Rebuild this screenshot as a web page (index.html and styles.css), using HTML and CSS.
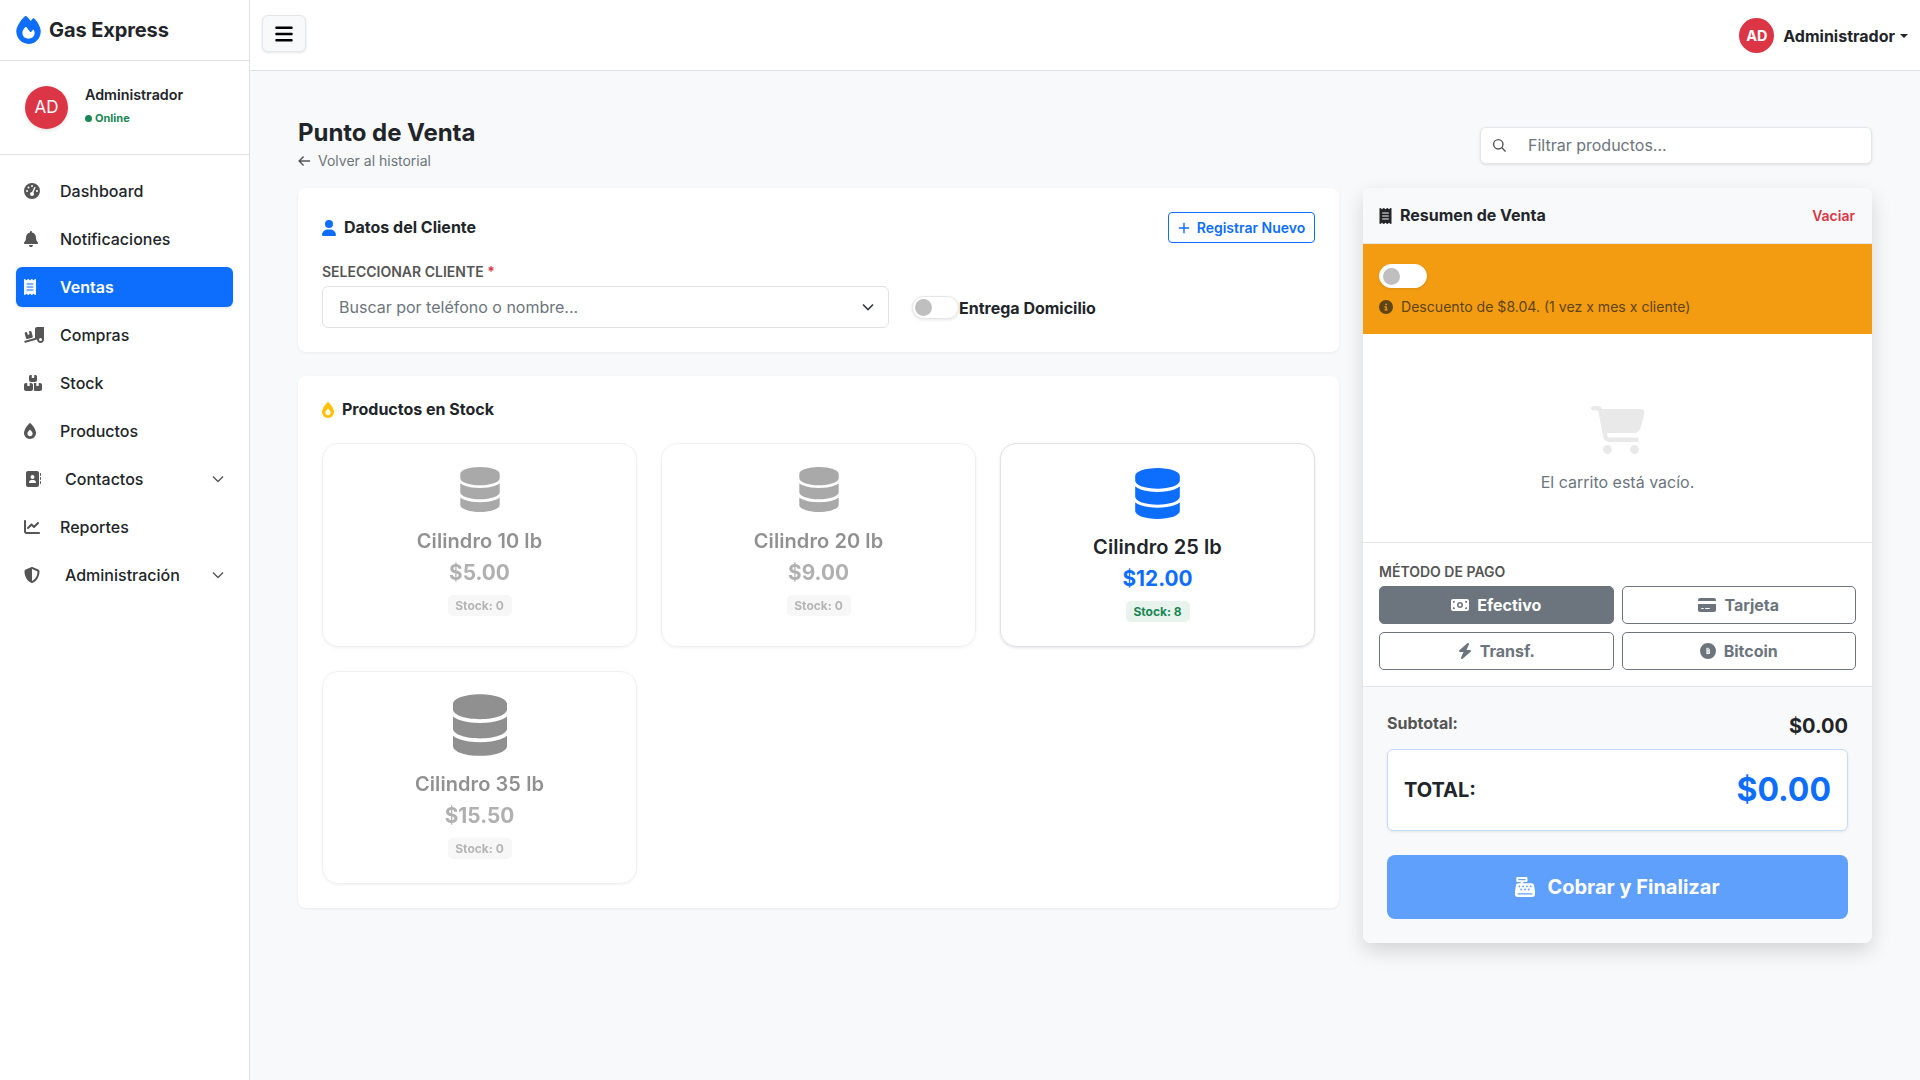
FILE: index.html
```html
<!DOCTYPE html>
<html lang="es">
<head>
<meta charset="utf-8">
<title>Punto de Venta</title>
<link rel="stylesheet" href="styles.css">
</head>
<body>
<svg class="sprite" xmlns="http://www.w3.org/2000/svg">
<symbol id="i-fire" viewBox="0 0 448 512"><path d="M159.3 5.4c7.8-7.3 19.9-7.2 27.7 .1c27.6 25.9 53.5 53.8 77.7 84c11-14.4 23.5-30.1 37-42.9c7.9-7.4 20.1-7.4 28 .1c34.6 33 63.9 76.6 84.5 118c20.3 40.8 33.8 82.5 33.8 111.9C448 404.2 348.2 512 224 512C98.4 512 0 404.1 0 276.5c0-38.4 17.8-85.3 45.4-131.7C73.3 97.7 112.7 48.6 159.3 5.4zM225.7 416c25.3 0 47.7-7 68.8-21c42.1-29.4 53.4-88.2 28.1-134.4c-4.5-9-16-9.6-22.5-2l-25.2 29.3c-6.6 7.6-18.5 7.4-24.7-.5c-16.5-21-46-58.5-62.8-79.8c-6.3-8-18.3-8.1-24.7-.1c-33.8 42.5-50.8 69.3-50.8 99.4C112 375.4 162.6 416 225.7 416z"/></symbol>
<symbol id="i-gauge" viewBox="0 0 512 512"><path d="M0 256a256 256 0 1 1 512 0A256 256 0 1 1 0 256zM288 96a32 32 0 1 0 -64 0 32 32 0 1 0 64 0zM256 416c35.3 0 64-28.7 64-64c0-17.4-6.9-33.1-18.1-44.6L366 161.7c5.3-12.1-.2-26.3-12.3-31.6s-26.3 .2-31.6 12.3L257.9 288c-.6 0-1.3 0-1.9 0c-35.3 0-64 28.7-64 64s28.7 64 64 64zM176 144a32 32 0 1 0 -64 0 32 32 0 1 0 64 0zM96 288a32 32 0 1 0 0-64 32 32 0 1 0 0 64zm352-32a32 32 0 1 0 -64 0 32 32 0 1 0 64 0z"/></symbol>
<symbol id="i-bell" viewBox="0 0 448 512"><path d="M224 0c-17.7 0-32 14.3-32 32V51.2C119 66 64 130.6 64 208v18.8c0 47-17.3 92.4-48.5 127.6l-7.4 8.3c-8.4 9.4-10.4 22.9-5.3 34.4S19.4 416 32 416H416c12.6 0 24-7.4 29.2-18.9s3.1-25-5.3-34.4l-7.4-8.3C401.3 319.2 384 273.9 384 226.8V208c0-77.4-55-142-128-156.8V32c0-17.7-14.3-32-32-32zm45.3 493.3c12-12 18.7-28.3 18.7-45.3H224 160c0 17 6.7 33.3 18.7 45.3s28.3 18.7 45.3 18.7s33.3-6.7 45.3-18.7z"/></symbol>
<symbol id="i-receipt" viewBox="0 0 384 512"><path d="M14 2.2C22.5-1.7 32.5-.3 39.6 5.8L80 40.4 120.4 5.8c9-7.7 22.3-7.7 31.2 0L192 40.4 232.4 5.8c9-7.7 22.2-7.7 31.2 0L304 40.4 344.4 5.8c7.1-6.1 17.1-7.5 25.6-3.6s14 12.4 14 21.8V488c0 9.4-5.5 17.9-14 21.8s-18.5 2.5-25.6-3.6L304 471.6l-40.4 34.6c-9 7.7-22.3 7.7-31.2 0L192 471.6l-40.4 34.6c-9 7.7-22.2 7.7-31.2 0L80 471.6 39.6 506.2c-7.1 6.1-17.1 7.5-25.6 3.6S0 497.4 0 488V24C0 14.6 5.5 6.1 14 2.2zM96 144c-8.8 0-16 7.2-16 16s7.2 16 16 16H288c8.8 0 16-7.2 16-16s-7.2-16-16-16H96zM80 352c0 8.8 7.2 16 16 16H288c8.8 0 16-7.2 16-16s-7.2-16-16-16H96c-8.8 0-16 7.2-16 16zM96 240c-8.8 0-16 7.2-16 16s7.2 16 16 16H288c8.8 0 16-7.2 16-16s-7.2-16-16-16H96z"/></symbol>
<symbol id="i-truck" viewBox="0 0 640 512"><path d="M640 0V400c0 61.9-50.1 112-112 112c-61 0-110.5-48.7-112-109.3L48.4 502.9c-17.1 4.6-34.6-5.4-39.3-22.5s5.4-34.6 22.5-39.3L352 353.8V64c0-35.3 28.7-64 64-64H640zM576 400a48 48 0 1 0 -96 0 48 48 0 1 0 96 0zM23.1 207.7c-4.6-17.1 5.6-34.6 22.6-39.2l46.4-12.4 20.7 77.3c2.3 8.5 11.1 13.6 19.6 11.3l30.9-8.3c8.5-2.3 13.6-11.1 11.3-19.6l-20.7-77.3 46.4-12.4c17.1-4.6 34.6 5.6 39.2 22.6l41.4 154.5c4.6 17.1-5.6 34.6-22.6 39.2L103.7 384.9c-17.1 4.6-34.6-5.6-39.2-22.6L23.1 207.7z"/></symbol>
<symbol id="i-boxes" viewBox="0 0 576 512"><path d="M248 0H208c-26.5 0-48 21.5-48 48V160c0 35.3 28.7 64 64 64H352c35.3 0 64-28.7 64-64V48c0-26.5-21.5-48-48-48H328V80c0 8.8-7.2 16-16 16H264c-8.8 0-16-7.2-16-16V0zM64 256c-35.3 0-64 28.7-64 64V448c0 35.3 28.7 64 64 64H224c35.3 0 64-28.7 64-64V320c0-35.3-28.7-64-64-64H184v80c0 8.8-7.2 16-16 16H120c-8.8 0-16-7.2-16-16V256H64zM352 512H512c35.3 0 64-28.7 64-64V320c0-35.3-28.7-64-64-64H472v80c0 8.8-7.2 16-16 16H408c-8.8 0-16-7.2-16-16V256H352c-15 0-28.8 5.1-39.7 13.8c4.9 10.4 7.7 22 7.7 34.2V464c0 12.2-2.8 23.8-7.7 34.2C323.2 506.9 337 512 352 512z"/></symbol>
<symbol id="i-burn" viewBox="0 0 384 512"><path fill-rule="evenodd" d="M192 0c5 0 10 2 14 5.500C282 76 340 160 372 254c8 21 12 44 12 67c0 105-86 191-192 191S0 426 0 321c0-23 4-46 12-67C44 160 102 76 178 5.500C182 2 187 0 192 0zM192 208c-34 38-84 88-84 134c0 47 38 82 84 82s84-35 84-82c0-46-50-96-84-134z"/></symbol>
<symbol id="i-book" viewBox="0 0 512 512"><path d="M96 0C60.7 0 32 28.7 32 64V448c0 35.3 28.7 64 64 64H384c35.3 0 64-28.7 64-64V64c0-35.3-28.7-64-64-64H96zM208 288h64c44.2 0 80 35.8 80 80c0 8.8-7.2 16-16 16H144c-8.8 0-16-7.2-16-16c0-44.2 35.8-80 80-80zm-32-96a64 64 0 1 1 128 0 64 64 0 1 1 -128 0zM512 80c0-8.8-7.2-16-16-16s-16 7.2-16 16v64c0 8.8 7.2 16 16 16s16-7.2 16-16V80zM496 192c-8.8 0-16 7.2-16 16v64c0 8.8 7.2 16 16 16s16-7.2 16-16V208c0-8.8-7.2-16-16-16zm16 144c0-8.8-7.2-16-16-16s-16 7.2-16 16v64c0 8.8 7.2 16 16 16s16-7.2 16-16V336z"/></symbol>
<symbol id="i-chart" viewBox="0 0 512 512"><path d="M64 64c0-17.700-14.300-32-32-32S0 46.300 0 64V400c0 44.200 35.800 80 80 80H480c17.700 0 32-14.300 32-32s-14.300-32-32-32H80c-8.800 0-16-7.200-16-16V64zm406.600 86.600c12.500-12.500 12.500-32.800 0-45.300s-32.800-12.500-45.300 0L320 210.700l-57.400-57.400c-12.500-12.500-32.800-12.500-45.300 0l-112 112c-12.500 12.500-12.500 32.800 0 45.300s32.800 12.500 45.300 0L240 221.300l57.400 57.400c12.500 12.500 32.800 12.500 45.300 0l128-128z"/></symbol>
<symbol id="i-shield" viewBox="0 0 512 512"><path d="M256 0c4.600 0 9.200 1 13.400 2.900L457.700 82.800c22 9.300 38.400 31 38.300 57.200c-.5 99.200-41.300 280.700-213.600 363.200c-16.700 8-36.100 8-52.800 0C57.300 420.700 16.500 239.200 16 140c-.1-26.200 16.300-47.900 38.300-57.200L242.700 2.900C246.800 1 251.400 0 256 0zm0 66.800V444.800C394 378 431.100 230.100 432 141.400L256 66.800l0 0z"/></symbol>
<symbol id="i-bars" viewBox="0 0 448 512"><path d="M0 96C0 78.300 14.300 64 32 64H416c17.700 0 32 14.300 32 32s-14.300 32-32 32H32C14.300 128 0 113.700 0 96zM0 256c0-17.700 14.300-32 32-32H416c17.700 0 32 14.300 32 32s-14.300 32-32 32H32c-17.700 0-32-14.300-32-32zM448 416c0 17.700-14.300 32-32 32H32c-17.700 0-32-14.300-32-32s14.300-32 32-32H416c17.700 0 32 14.300 32 32z"/></symbol>
<symbol id="i-user" viewBox="0 0 448 512"><path d="M224 256A128 128 0 1 0 224 0a128 128 0 1 0 0 256zm-45.700 48C79.800 304 0 383.800 0 482.300C0 498.700 13.300 512 29.700 512H418.300c16.400 0 29.700-13.300 29.700-29.700C448 383.800 368.200 304 269.700 304H178.300z"/></symbol>
<symbol id="i-db" viewBox="0 0 448 512"><path d="M448 80v48c0 44.200-100.300 80-224 80S0 172.200 0 128V80C0 35.800 100.300 0 224 0S448 35.800 448 80zM393.200 214.700c20.800-7.400 39.900-16.900 54.800-28.600V288c0 44.200-100.300 80-224 80S0 332.200 0 288V186.100c14.900 11.800 34 21.200 54.800 28.600C99.700 230.700 159.500 240 224 240s124.300-9.300 169.200-25.300zM0 346.100c14.900 11.800 34 21.200 54.800 28.600C99.700 390.700 159.500 400 224 400s124.300-9.300 169.200-25.300c20.800-7.400 39.900-16.900 54.800-28.600V432c0 44.200-100.300 80-224 80S0 476.200 0 432V346.100z"/></symbol>
<symbol id="i-cart" viewBox="0 0 576 512"><path d="M0 24C0 10.700 10.700 0 24 0H69.500c22 0 41.500 12.800 50.600 32h411c26.300 0 45.500 25 38.600 50.400l-41 152.300c-8.500 31.400-37 53.300-69.500 53.300H170.700l5.400 28.500c2.200 11.300 12.100 19.500 23.600 19.500H488c13.300 0 24 10.700 24 24s-10.700 24-24 24H199.700c-34.600 0-64.300-24.600-70.700-58.500L77.400 54.500c-.7-3.800-4-6.500-7.900-6.500H24C10.700 48 0 37.300 0 24zM128 464a48 48 0 1 1 96 0 48 48 0 1 1 -96 0zm336-48a48 48 0 1 1 0 96 48 48 0 1 1 0-96z"/></symbol>
<symbol id="i-info" viewBox="0 0 512 512"><path d="M256 512A256 256 0 1 0 256 0a256 256 0 1 0 0 512zM216 336h24V272H216c-13.300 0-24-10.700-24-24s10.700-24 24-24h48c13.300 0 24 10.700 24 24v88h8c13.300 0 24 10.700 24 24s-10.700 24-24 24H216c-13.300 0-24-10.700-24-24s10.700-24 24-24zm40-208a32 32 0 1 1 0 64 32 32 0 1 1 0-64z"/></symbol>
<symbol id="i-money" viewBox="0 0 576 512"><path fill-rule="evenodd" d="M64 64C28.700 64 0 92.700 0 128V384c0 35.300 28.700 64 64 64H512c35.300 0 64-28.700 64-64V128c0-35.300-28.700-64-64-64H64zm64 320H64V320c35.300 0 64 28.700 64 64zM64 192V128h64c0 35.300-28.700 64-64 64zM448 384c0-35.300 28.700-64 64-64v64H448zm64-192c-35.300 0-64-28.700-64-64h64v64zM288 160a96 96 0 1 1 0 192 96 96 0 1 1 0-192zM288 210a46 46 0 1 0 0 92 46 46 0 1 0 0-92z"/></symbol>
<symbol id="i-card" viewBox="0 0 576 512"><path d="M64 32C28.700 32 0 60.700 0 96v32H576V96c0-35.300-28.700-64-64-64H64zM576 224H0V416c0 35.300 28.700 64 64 64H512c35.300 0 64-28.700 64-64V224zM112 352h64c8.800 0 16 7.200 16 16s-7.200 16-16 16H112c-8.800 0-16-7.200-16-16s7.200-16 16-16zm112 16c0-8.800 7.200-16 16-16H368c8.800 0 16 7.200 16 16s-7.200 16-16 16H240c-8.800 0-16-7.200-16-16z"/></symbol>
<symbol id="i-bolt" viewBox="0 0 448 512"><path d="M349.400 44.600c5.900-13.700 1.500-29.700-10.600-38.500s-28.600-8-39.900 1.800l-256 224c-10 8.800-13.600 22.900-8.900 35.300S50.700 288 64 288H175.500L98.600 467.400c-5.900 13.700-1.500 29.700 10.600 38.500s28.600 8 39.900-1.800l256-224c10-8.800 13.600-22.900 8.900-35.300s-16.600-20.700-30-20.700H272.500L349.400 44.600z"/></symbol>
<symbol id="i-btc" viewBox="0 0 512 512"><path fill-rule="evenodd" d="M256 0a256 256 0 1 1 0 512A256 256 0 1 1 256 0zM204 164v184h64c34 0 56-18 56-48c0-20-10-35-28-41c14-7 22-20 22-36c0-26-18-44-48-46v-23h-22v22h-14v-22h-22v22l0 0zM240 198h22c11 0 18 7 18 17s-7 19-18 19h-22zM240 268h26c13 0 21 7 21 18s-8 20-21 20h-26z"/></symbol>
<symbol id="i-register" viewBox="0 0 512 512"><path d="M64 0C46.300 0 32 14.300 32 32V96c0 17.700 14.300 32 32 32h80v32H87c-31.600 0-58.500 23.100-63.300 54.400L1.100 364.100C.4 368.800 0 373.600 0 378.400V448c0 35.300 28.700 64 64 64H448c35.300 0 64-28.700 64-64V378.400c0-4.800-.4-9.600-1.100-14.400L488.200 214.400C483.500 183.100 456.600 160 425 160H208V128h80c17.700 0 32-14.300 32-32V32c0-17.700-14.300-32-32-32H64zM96 48H256c8.800 0 16 7.200 16 16s-7.200 16-16 16H96c-8.800 0-16-7.200-16-16s7.200-16 16-16zM64 432c0-8.800 7.200-16 16-16H432c8.800 0 16 7.200 16 16s-7.200 16-16 16H80c-8.800 0-16-7.200-16-16zm48-168a24 24 0 1 1 0-48 24 24 0 1 1 0 48zm120-24a24 24 0 1 1 -48 0 24 24 0 1 1 48 0zM160 344a24 24 0 1 1 0-48 24 24 0 1 1 0 48zM328 240a24 24 0 1 1 -48 0 24 24 0 1 1 48 0zM256 344a24 24 0 1 1 0-48 24 24 0 1 1 0 48zM424 240a24 24 0 1 1 -48 0 24 24 0 1 1 48 0zM352 344a24 24 0 1 1 0-48 24 24 0 1 1 0 48z"/></symbol>
</svg>

<div class="app">
  <aside class="sidebar">
    <div class="brand">
      <svg class="brand-icon"><use href="#i-fire"/></svg>
      <span class="brand-name">Gas Express</span>
    </div>
    <div class="user-panel">
      <div class="avatar avatar-lg">AD</div>
      <div class="user-meta">
        <div class="user-name">Administrador</div>
        <div class="user-status"><span class="dot"></span>Online</div>
      </div>
    </div>
    <nav class="nav">
      <a class="nav-link"><span class="nav-ic"><svg class="ic-gauge"><use href="#i-gauge"/></svg></span>Dashboard</a>
      <a class="nav-link"><span class="nav-ic"><svg class="ic-bell"><use href="#i-bell"/></svg></span>Notificaciones</a>
      <a class="nav-link active"><span class="nav-ic"><svg class="ic-receipt"><use href="#i-receipt"/></svg></span>Ventas</a>
      <a class="nav-link"><span class="nav-ic"><svg class="ic-truck"><use href="#i-truck"/></svg></span>Compras</a>
      <a class="nav-link"><span class="nav-ic"><svg class="ic-boxes"><use href="#i-boxes"/></svg></span>Stock</a>
      <a class="nav-link"><span class="nav-ic"><svg class="ic-burn"><use href="#i-burn"/></svg></span>Productos</a>
      <a class="nav-link"><span class="nav-ic nav-ic-wide"><svg class="ic-book"><use href="#i-book"/></svg></span>Contactos<svg class="chev" viewBox="0 0 12 8"><path d="M1 1.500l5 5 5-5"/></svg></a>
      <a class="nav-link"><span class="nav-ic"><svg class="ic-chart"><use href="#i-chart"/></svg></span>Reportes</a>
      <a class="nav-link"><span class="nav-ic nav-ic-wide"><svg class="ic-shield"><use href="#i-shield"/></svg></span>Administración<svg class="chev" viewBox="0 0 12 8"><path d="M1 1.500l5 5 5-5"/></svg></a>
    </nav>
  </aside>

  <div class="content">
    <header class="topbar">
      <button class="menu-btn"><svg><use href="#i-bars"/></svg></button>
      <div class="top-user">
        <div class="avatar avatar-sm">AD</div>
        <span class="top-name">Administrador</span>
        <span class="caret"></span>
      </div>
    </header>

    <main class="main">
      <div class="page-head">
        <div>
          <h1 class="page-title">Punto de Venta</h1>
          <a class="back-link"><svg viewBox="0 0 14 12"><path d="M13 6H1.500M6 1.200L1.200 6 6 10.800"/></svg>Volver al historial</a>
        </div>
        <div class="search">
          <svg viewBox="0 0 16 16"><circle cx="6.700" cy="6.700" r="5"/><path d="M10.500 10.500L14.500 14.500"/></svg>
          <span class="search-text">Filtrar productos...</span>
        </div>
      </div>

      <div class="pos-grid">
        <div class="left-col">
          <section class="card client-card">
            <div class="card-head">
              <h2 class="card-title"><svg class="ic-title-user"><use href="#i-user"/></svg>Datos del Cliente</h2>
              <button class="btn-new"><svg viewBox="0 0 12 12"><path d="M6 .8v10.400M.8 6h10.400"/></svg>Registrar Nuevo</button>
            </div>
            <div class="client-row">
              <div class="client-field">
                <div class="field-label">SELECCIONAR CLIENTE <span class="req">*</span></div>
                <div class="select">
                  <span>Buscar por teléfono o nombre...</span>
                  <svg class="select-chev" viewBox="0 0 12 8"><path d="M1 1.500l5 5 5-5"/></svg>
                </div>
              </div>
              <div class="delivery">
                <span class="switch"><span class="knob"></span></span>
                <span class="delivery-text">Entrega Domicilio</span>
              </div>
            </div>
          </section>

          <section class="card products-card">
            <h2 class="card-title products-title"><svg class="ic-title-flame"><use href="#i-burn"/></svg>Productos en Stock</h2>
            <div class="product-grid">
              <article class="product out">
                <svg class="db db-sm db-muted"><use href="#i-db"/></svg>
                <div class="p-name">Cilindro 10 lb</div>
                <div class="p-price">$5.00</div>
                <div class="p-stock">Stock: 0</div>
              </article>
              <article class="product out">
                <svg class="db db-sm db-muted"><use href="#i-db"/></svg>
                <div class="p-name">Cilindro 20 lb</div>
                <div class="p-price">$9.00</div>
                <div class="p-stock">Stock: 0</div>
              </article>
              <article class="product">
                <svg class="db db-md db-blue"><use href="#i-db"/></svg>
                <div class="p-name">Cilindro 25 lb</div>
                <div class="p-price">$12.00</div>
                <div class="p-stock">Stock: 8</div>
              </article>
              <article class="product out">
                <svg class="db db-lg db-dark"><use href="#i-db"/></svg>
                <div class="p-name">Cilindro 35 lb</div>
                <div class="p-price">$15.50</div>
                <div class="p-stock">Stock: 0</div>
              </article>
            </div>
          </section>
        </div>

        <aside class="card summary">
          <div class="sum-head">
            <h2 class="card-title sum-title"><svg class="ic-title-receipt"><use href="#i-receipt"/></svg>Resumen de Venta</h2>
            <span class="clear">Vaciar</span>
          </div>
          <div class="promo">
            <span class="switch switch-promo"><span class="knob"></span></span>
            <div class="promo-text"><svg><use href="#i-info"/></svg>Descuento de $8.04. (1 vez x mes x cliente)</div>
          </div>
          <div class="empty">
            <svg><use href="#i-cart"/></svg>
            <p>El carrito está vacío.</p>
          </div>
          <div class="pay">
            <div class="pay-label">MÉTODO DE PAGO</div>
            <div class="pay-grid">
              <button class="pay-btn selected"><svg class="ic-money"><use href="#i-money"/></svg>Efectivo</button>
              <button class="pay-btn"><svg class="ic-card"><use href="#i-card"/></svg>Tarjeta</button>
              <button class="pay-btn"><svg class="ic-bolt"><use href="#i-bolt"/></svg>Transf.</button>
              <button class="pay-btn"><svg class="ic-btc"><use href="#i-btc"/></svg>Bitcoin</button>
            </div>
          </div>
          <div class="totals">
            <div class="subtotal"><span class="sub-label">Subtotal:</span><span class="sub-value">$0.00</span></div>
            <div class="total-box"><span class="total-label">TOTAL:</span><span class="total-value">$0.00</span></div>
            <button class="charge"><svg><use href="#i-register"/></svg>Cobrar y Finalizar</button>
          </div>
        </aside>
      </div>
    </main>
  </div>
</div>
</body>
</html>
```
FILE: styles.css
```css
* { box-sizing: border-box; }
html, body { margin: 0; height: 100%; }
body {
  font-family: "Inter", "Liberation Sans", sans-serif;
  color: #212529;
  background: #f8f9fa;
  font-size: 16px;
  line-height: 1.5;
}
h1, h2, p { margin: 0; }
button { font-family: inherit; cursor: pointer; }
svg { display: block; fill: currentColor; flex: none; }
.sprite { display: none; }

.app { display: flex; height: 1080px; overflow: hidden; }

/* Sidebar */
.sidebar {
  width: 250px;
  flex: none;
  background: #fff;
  border-right: 1px solid #dee2e6;
}
.brand {
  height: 61px;
  display: flex;
  align-items: center;
  gap: 8px;
  padding: 0 16px 1px;
  border-bottom: 1px solid #dee2e6;
}
.brand-icon { width: 25px; height: 28px; color: #0d6efd; }
.brand-name { font-size: 20px; font-weight: 700; letter-spacing: -.1px; }
.user-panel {
  height: 94px;
  display: flex;
  align-items: center;
  gap: 17px;
  padding: 0 25px;
  border-bottom: 1px solid #dee2e6;
}
.user-meta { padding-bottom: 3px; }
.avatar {
  display: flex;
  align-items: center;
  justify-content: center;
  border-radius: 50%;
  background: #dc3545;
  color: #fff;
}
.avatar-lg { width: 43px; height: 43px; font-size: 17px; box-shadow: 0 2px 4px rgba(0,0,0,.1); }
.avatar-sm { width: 35px; height: 35px; font-size: 14.500px; font-weight: 700; }
.user-name { font-size: 14.300px; font-weight: 600; line-height: 20px; margin-bottom: 4px; }
.user-status {
  display: flex;
  align-items: center;
  gap: 3px;
  font-size: 11px;
  font-weight: 700;
  color: #198754;
  line-height: 18px;
}
.dot { width: 7px; height: 7px; border-radius: 50%; background: #198754; }

.nav { padding: 16px; display: flex; flex-direction: column; gap: 8px; }
.nav-link {
  height: 40px;
  display: flex;
  align-items: center;
  padding: 0 8px;
  font-size: 16px;
  font-weight: 500;
  border-radius: 6px;
  color: #212529;
}
.nav-link.active {
  background: #0d6efd;
  color: #fff;
  font-weight: 600;
  box-shadow: 0 1px 3px rgba(0,0,0,.12);
}
.nav-ic { width: 36px; flex: none; display: flex; color: #555; }
.nav-ic-wide { width: 41px; }
.active .nav-ic { color: #f4f7ff; }
.ic-gauge { width: 16px; height: 16px; }
.ic-bell { width: 14px; height: 16px; }
.ic-receipt { width: 12px; height: 16px; }
.ic-truck { width: 20px; height: 16px; }
.ic-boxes { width: 18px; height: 16px; }
.ic-burn { width: 12px; height: 16px; }
.ic-book { width: 16px; height: 16px; margin-left: 1px; }
.ic-chart { width: 16px; height: 16px; }
.ic-shield { width: 16px; height: 16px; }
.chev {
  width: 12px;
  height: 8px;
  margin-left: auto;
  margin-right: 1px;
  fill: none;
  stroke: #555;
  stroke-width: 1.400;
}

/* Top bar */
.content { flex: 1; min-width: 0; display: flex; flex-direction: column; }
.topbar {
  height: 71px;
  flex: none;
  background: #fff;
  border-bottom: 1px solid #dee2e6;
  display: flex;
  align-items: center;
  justify-content: space-between;
  padding: 0 12px 1px;
}
.menu-btn {
  width: 44px;
  height: 37px;
  padding: 0;
  background: #f8f9fa;
  border: 1px solid #e4e7ea;
  border-radius: 6px;
  box-shadow: 0 1px 3px rgba(0,0,0,.1);
  display: flex;
  align-items: center;
  justify-content: center;
  margin-top: -2px;
}
.menu-btn svg { width: 18px; height: 20px; color: #000; }
.top-user { display: flex; align-items: center; margin-top: 2px; }
.top-name { font-size: 16px; font-weight: 700; margin-left: 9px; }
.caret {
  margin-left: 5px;
  border-top: 4px solid #212529;
  border-left: 4px solid transparent;
  border-right: 4px solid transparent;
}

/* Main */
.main { flex: 1; padding: 47px 48px 0; }
.page-head {
  display: flex;
  align-items: center;
  justify-content: space-between;
  margin-bottom: 17px;
}
.page-title { font-size: 24px; font-weight: 700; line-height: 29px; letter-spacing: -.05px; }
.back-link {
  display: flex;
  align-items: center;
  gap: 7px;
  font-size: 14px;
  line-height: 20px;
  color: #6c757d;
  margin-top: 4px;
}
.back-link svg {
  width: 13px;
  height: 12px;
  fill: none;
  stroke: #555;
  stroke-width: 1.500;
}
.search {
  width: 392px;
  height: 37px;
  display: flex;
  align-items: center;
  background: #fff;
  border: 1px solid #e4e7ea;
  border-radius: 6px;
  box-shadow: 0 1px 3px rgba(0,0,0,.1);
  padding-left: 11px;
  margin-top: 1px;
  color: #6c757d;
  font-size: 16px;
}
.search svg {
  width: 15px;
  height: 15px;
  fill: none;
  stroke: #555;
  stroke-width: 1.500;
  margin-right: 21px;
}

.pos-grid {
  display: grid;
  grid-template-columns: minmax(0, 1041fr) minmax(0, 509fr);
  column-gap: 24px;
  align-items: start;
}
.left-col { display: flex; flex-direction: column; gap: 24px; }
.card {
  background: #fff;
  border-radius: 8px;
  box-shadow: 0 1px 3px rgba(0,0,0,.06);
}
.client-card { padding: 24px; }
.card-head { display: flex; align-items: center; justify-content: space-between; margin-bottom: 19px; }
.card-title {
  display: flex;
  align-items: center;
  font-size: 16px;
  font-weight: 700;
  line-height: 19px;
}
.ic-title-user { width: 14px; height: 16px; color: #0d6efd; margin-right: 8px; }
.ic-title-flame { width: 12px; height: 16px; color: #ffc107; margin-right: 8px; }
.ic-title-receipt { width: 13px; height: 16px; margin-right: 8px; }
.btn-new {
  height: 31px;
  width: 147px;
  padding: 0;
  display: flex;
  align-items: center;
  justify-content: center;
  gap: 7px;
  background: #fff;
  border: 1px solid #0d6efd;
  border-radius: 4px;
  color: #0d6efd;
  font-size: 14px;
  font-weight: 600;
}
.btn-new svg { width: 12px; height: 12px; fill: none; stroke: #0d6efd; stroke-width: 1.400; }
.client-row { display: flex; align-items: flex-end; gap: 23px; }
.client-field { width: 567px; flex: none; }
.field-label { font-size: 14px; font-weight: 600; color: #555; line-height: 20px; margin-bottom: 4px; }
.req { color: #dc3545; }
.select {
  height: 42px;
  display: flex;
  align-items: center;
  justify-content: space-between;
  padding: 0 14px 0 16px;
  background: #fff;
  border: 1px solid #dee2e6;
  border-radius: 6px;
  color: #6c757d;
  font-size: 16px;
}
.select-chev { width: 12px; height: 8px; fill: none; stroke: #343a40; stroke-width: 1.600; }
.delivery { display: flex; align-items: center; height: 42px; padding-top: 1px; }
.delivery-text { font-size: 16px; font-weight: 700; padding-top: 1px; }
.switch {
  width: 47px;
  height: 23px;
  display: flex;
  align-items: center;
  padding-left: 2px;
  background: #fff;
  border: 1px solid #e4e7ea;
  border-radius: 12px;
  box-shadow: 0 1px 3px rgba(0,0,0,.1);
}
.knob { width: 17px; height: 17px; border-radius: 50%; background: #bfbfbf; }

/* Products */
.products-card { padding: 24px; }
.products-title { margin-bottom: 24px; line-height: 19px; }
.product-grid { display: grid; grid-template-columns: repeat(3, 1fr); gap: 24px; }
.product {
  display: flex;
  flex-direction: column;
  align-items: center;
  padding: 24px;
  background: #fff;
  border: 1px solid #dee2e6;
  border-radius: 16px;
  box-shadow: 0 1px 3px rgba(0,0,0,.1);
}
.product.out { filter: grayscale(1); opacity: .5; }
.db { margin-bottom: 16px; }
.db-sm { width: 40px; height: 45px; margin-top: -1px; margin-bottom: 17px; }
.db-md { width: 45px; height: 51px; }
.db-lg { width: 54px; height: 62px; margin-top: -2px; }
.db-muted { color: #555; }
.db-dark { color: #212529; }
.db-blue { color: #0d6efd; }
.p-name { font-size: 20px; font-weight: 600; line-height: 24px; margin-bottom: 7px; letter-spacing: .004em; }
.p-price { font-size: 20.800px; font-weight: 700; line-height: 26px; color: #0d6efd; margin-bottom: 9px; }
.p-stock {
  height: 21px;
  width: 64px;
  display: flex;
  align-items: center;
  justify-content: center;
  font-size: 12px;
  font-weight: 700;
  color: #198754;
  background: #e8f3ee;
  border-radius: 5px;
}

/* Summary */
.summary {
  height: 755px;
  display: flex;
  flex-direction: column;
  overflow: hidden;
  box-shadow: 0 8px 20px rgba(0,0,0,.15);
}
.sum-head {
  height: 56px;
  flex: none;
  display: flex;
  align-items: center;
  justify-content: space-between;
  padding: 0 17px 0 16px;
  background: #f8f9fa;
  border-bottom: 1px solid #e4e7ea;
}
.clear { color: #dc3545; font-size: 14px; font-weight: 600; }
.promo { height: 90px; flex: none; background: #f39c12; padding: 20px 16px 0; }
.switch-promo { width: 48px; height: 24px; border-color: #fff; padding-left: 3px; }
.promo-text {
  display: flex;
  align-items: center;
  gap: 8px;
  margin-top: 9px;
  font-size: 14.080px;
  line-height: 20px;
  color: #5e4416;
}
.promo-text svg { width: 14px; height: 14px; }
.empty {
  height: 209px;
  flex: none;
  display: flex;
  flex-direction: column;
  align-items: center;
  padding-top: 72px;
  border-bottom: 1px solid #e4e7ea;
}
.empty svg { width: 54px; height: 48px; color: #e9e9e9; margin-bottom: 16px; }
.empty p { font-size: 16px; line-height: 24px; color: #6c757d; }
.pay { height: 144px; flex: none; padding: 20px 16px 0; border-bottom: 1px solid #e4e7ea; }
.pay-label { font-size: 14px; font-weight: 600; color: #555; line-height: 18px; margin-bottom: 5px; }
.pay-grid { display: grid; grid-template-columns: 1fr 1fr; gap: 8px; }
.pay-btn {
  height: 38px;
  padding: 0;
  display: flex;
  align-items: center;
  justify-content: center;
  gap: 8px;
  background: #fff;
  border: 1px solid #6c757d;
  border-radius: 5px;
  color: #6c757d;
  font-size: 16px;
  font-weight: 700;
}
.pay-btn.selected { background: #6c757d; color: #fff; }
.ic-money { width: 18px; height: 16px; }
.ic-card { width: 18px; height: 16px; }
.ic-bolt { width: 14px; height: 16px; }
.ic-btc { width: 16px; height: 16px; }
.totals { flex: 1; background: #f8f9fa; padding: 24px; }
.subtotal { display: flex; justify-content: space-between; height: 38px; }
.sub-label { font-size: 16px; font-weight: 700; color: #555; line-height: 24px; }
.sub-value { font-size: 20px; font-weight: 700; line-height: 30px; }
.total-box {
  height: 82px;
  display: flex;
  align-items: center;
  justify-content: space-between;
  padding: 0 16px;
  background: #fff;
  border: 1px solid #c4dcfd;
  border-radius: 6px;
  box-shadow: 0 1px 3px rgba(0,0,0,.08);
}
.total-label { font-size: 20px; font-weight: 700; }
.total-value { font-size: 32px; font-weight: 700; color: #0d6efd; }
.charge {
  width: 100%;
  height: 64px;
  margin-top: 24px;
  display: flex;
  align-items: center;
  justify-content: center;
  gap: 12px;
  border: 0;
  border-radius: 8px;
  background: #5fa0fd;
  color: #fff;
  font-size: 20px;
  font-weight: 700;
}
.charge svg { width: 20px; height: 20px; }
```
